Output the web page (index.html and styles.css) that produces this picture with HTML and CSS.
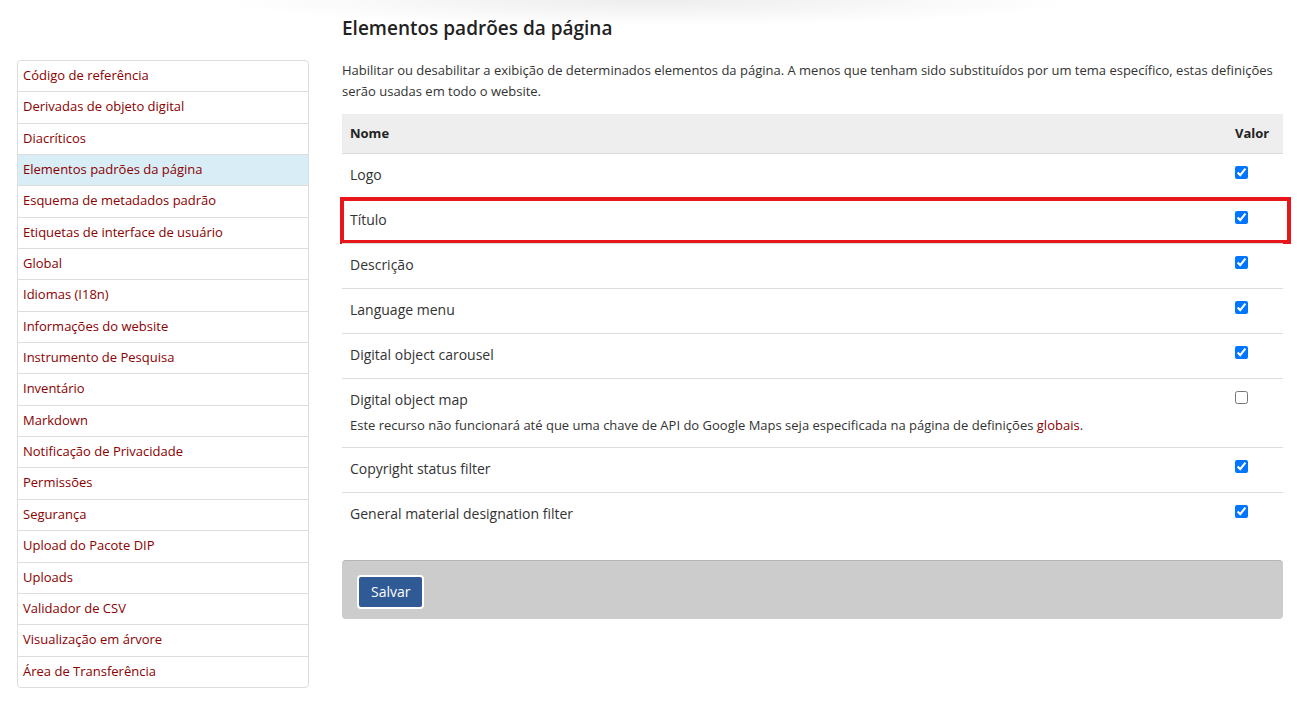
FILE: index.html
```html
<!DOCTYPE html>
<html lang="pt">
<head>
<meta charset="utf-8">
<title>Elementos padrões da página</title>
<link rel="stylesheet" href="styles.css">
</head>
<body>
<div class="top-shadow"></div>
<div class="layout">
  <nav class="sidebar">
    <a class="nav-item" href="#">Código de referência</a>
    <a class="nav-item" href="#">Derivadas de objeto digital</a>
    <a class="nav-item" href="#">Diacríticos</a>
    <a class="nav-item active" href="#">Elementos padrões da página</a>
    <a class="nav-item" href="#">Esquema de metadados padrão</a>
    <a class="nav-item" href="#">Etiquetas de interface de usuário</a>
    <a class="nav-item" href="#">Global</a>
    <a class="nav-item" href="#">Idiomas (I18n)</a>
    <a class="nav-item" href="#">Informações do website</a>
    <a class="nav-item" href="#">Instrumento de Pesquisa</a>
    <a class="nav-item" href="#">Inventário</a>
    <a class="nav-item" href="#">Markdown</a>
    <a class="nav-item" href="#">Notificação de Privacidade</a>
    <a class="nav-item" href="#">Permissões</a>
    <a class="nav-item" href="#">Segurança</a>
    <a class="nav-item" href="#">Upload do Pacote DIP</a>
    <a class="nav-item" href="#">Uploads</a>
    <a class="nav-item" href="#">Validador de CSV</a>
    <a class="nav-item" href="#">Visualização em árvore</a>
    <a class="nav-item" href="#">Área de Transferência</a>
  </nav>
  <main class="main">
    <h1 class="title">Elementos padrões da página</h1>
    <p class="intro">Habilitar ou desabilitar a exibição de determinados elementos da página. A menos que tenham sido substituídos por um tema específico, estas definições serão usadas em todo o website.</p>
    <div class="table">
      <div class="row head">
        <div class="cell name">Nome</div>
        <div class="cell value">Valor</div>
      </div>
      <div class="row">
        <div class="cell name">Logo</div>
        <div class="cell value"><input type="checkbox" checked></div>
      </div>
      <div class="row highlight">
        <div class="cell name">Título</div>
        <div class="cell value"><input type="checkbox" checked></div>
      </div>
      <div class="row">
        <div class="cell name">Descrição</div>
        <div class="cell value"><input type="checkbox" checked></div>
      </div>
      <div class="row">
        <div class="cell name">Language menu</div>
        <div class="cell value"><input type="checkbox" checked></div>
      </div>
      <div class="row">
        <div class="cell name">Digital object carousel</div>
        <div class="cell value"><input type="checkbox" checked></div>
      </div>
      <div class="row">
        <div class="cell name">Digital object map
          <div class="hint">Este recurso não funcionará até que uma chave de API do Google Maps seja especificada na página de definições <a href="#">globais</a>.</div>
        </div>
        <div class="cell value"><input type="checkbox"></div>
      </div>
      <div class="row">
        <div class="cell name">Copyright status filter</div>
        <div class="cell value"><input type="checkbox" checked></div>
      </div>
      <div class="row">
        <div class="cell name">General material designation filter</div>
        <div class="cell value"><input type="checkbox" checked></div>
      </div>
    </div>
    <div class="actions">
      <button class="btn" type="button">Salvar</button>
    </div>
  </main>
</div>
</body>
</html>
```
FILE: styles.css
```css
html, body {
  margin: 0;
  padding: 0;
}
body {
  font-family: "Open Sans", "Liberation Sans", sans-serif;
  color: #333;
  background: #fff;
  position: relative;
}
.top-shadow {
  position: absolute;
  left: 0;
  top: 0;
  width: 100%;
  height: 40px;
  background: radial-gradient(ellipse 430px 26px at 650px 0, rgba(0,0,0,0.07), rgba(0,0,0,0));
  pointer-events: none;
}
.layout {
  display: flex;
  align-items: flex-start;
  gap: 33px;
  padding: 0 14px 0 17px;
}
.sidebar {
  flex: 0 0 290px;
  margin-top: 60px;
  border: 1px solid #ddd;
  border-radius: 4px;
  display: flex;
  flex-direction: column;
  overflow: hidden;
}
.nav-item {
  display: block;
  padding: 4px 5px 6px;
  line-height: 20.35px;
  font-size: 13px;
  color: #8b0000;
  text-decoration: none;
  border-bottom: 1px solid #ddd;
}
.nav-item:last-child {
  border-bottom: none;
}
.nav-item.active {
  background: #d9edf7;
}
.main {
  flex: 1 1 auto;
  min-width: 0;
}
.title {
  margin: 14px 0 0;
  font-size: 19px;
  line-height: 28px;
  font-weight: 600;
  color: #222;
}
.intro {
  margin: 18px 0 12px;
  font-size: 13px;
  line-height: 21px;
  color: #333;
}
.table {
  display: flex;
  flex-direction: column;
}
.row {
  display: flex;
  border-top: 1px solid #ddd;
  position: relative;
}
.row.head {
  background: #eee;
  border-top: none;
  border-bottom: 1px solid #ddd;
  font-weight: 700;
}
.row.head + .row {
  border-top: none;
}
.cell {
  padding: 10px 8px 13px;
  font-size: 14px;
  line-height: 21px;
  color: #333;
}
.row.head .cell {
  padding-top: 9px;
  padding-bottom: 9px;
  line-height: 21px;
  font-size: 13px;
  color: #222;
}
.cell.name {
  flex: 1 1 auto;
}
.cell.value {
  flex: 0 0 48px;
  box-sizing: border-box;
  padding-left: 0;
  padding-right: 16px;
}
.row.head .cell.value {
  padding-left: 0;
  padding-right: 0;
}
.cell.value input {
  display: block;
  margin: 2px 0 0 0;
  width: 13px;
  height: 13px;
}
.hint {
  margin-top: 6px;
  font-size: 13px;
  line-height: 18px;
}
.hint a {
  color: #8b0000;
  text-decoration: none;
}
.row.highlight::after {
  content: "";
  position: absolute;
  left: -2px;
  right: -8px;
  top: -2px;
  bottom: -1px;
  border: 4px solid #e8151b;
  pointer-events: none;
}
.actions {
  margin-top: 23px;
  background: #ccc;
  border-top: 1px solid #b5b5b5;
  border-radius: 4px;
  padding: 14px 15px 10px;
  height: 34px;
}
.btn {
  font-family: "Open Sans", "Liberation Sans", sans-serif;
  font-size: 14px;
  line-height: 20px;
  color: #fff;
  background: #2f5a96;
  border: 2px solid #fff;
  border-radius: 4px;
  padding: 5px 12px;
  height: 34px;
  cursor: pointer;
}
```
